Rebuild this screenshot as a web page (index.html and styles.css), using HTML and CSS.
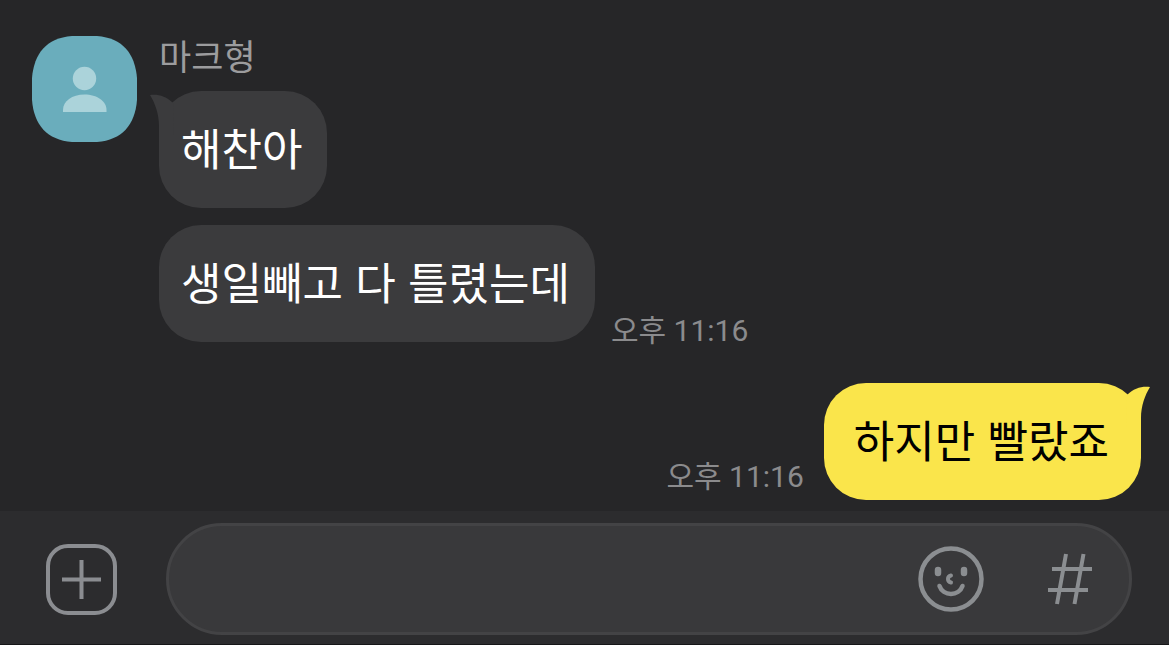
FILE: index.html
```html
<!DOCTYPE html>
<html lang="ko">
<head>
    <meta charset="UTF-8">
    <meta name="viewport" content="width=device-width, initial-scale=1.0">
    <title>마크형</title>
    <link rel="stylesheet" href="styles.css">
</head>
<body>
    <main class="chat">
        <section class="received">
            <div class="avatar">
                <svg viewBox="0 0 105 106" aria-hidden="true">
                    <path d="M40 0H65C91 2 103 18 105 42V64C103 89 90 104 65 106H40C15 104 2 89 0 64V42C2 18 14 2 40 0Z" fill="#6aadbc"/>
                    <circle cx="52.500" cy="42.500" r="11.700" fill="#abd3da"/>
                    <path d="M31 76v-2c0-9 9-15.500 21.500-15.500S74.500 65 74.500 74v2Z" fill="#abd3da"/>
                </svg>
            </div>
            <div class="messages">
                <h1 class="name">마크형</h1>
                <div class="row">
                    <p class="bubble">
                        <svg class="tail tail-left" viewBox="0 0 24 44" aria-hidden="true"><path d="M0 3C8 2 16 4 23 11L24 44H9V34C9 22 5 11 0 3Z" fill="#3b3b3d"/></svg>
                        해찬아
                    </p>
                </div>
                <div class="row">
                    <p class="bubble">생일빼고 다 틀렸는데</p>
                    <time class="time">오후 11:16</time>
                </div>
            </div>
        </section>

        <section class="row sent">
            <time class="time">오후 11:16</time>
            <p class="bubble bubble-mine">
                <svg class="tail tail-right" viewBox="0 0 24 44" aria-hidden="true"><path d="M24 3C16 2 8 4 1 11L0 44H15V34C15 22 19 11 24 3Z" fill="#fae54b"/></svg>
                하지만 빨랐죠
            </p>
        </section>
    </main>

    <form class="input-bar">
        <button class="icon-btn plus-btn" type="button" aria-label="추가">
            <svg viewBox="0 0 72 72" aria-hidden="true">
                <rect x="2" y="3" width="67" height="67" rx="20" fill="none" stroke="#8b8d91" stroke-width="4"/>
                <path d="M35.500 17v39M16 36.500h39" stroke="#8b8d91" stroke-width="4"/>
            </svg>
        </button>
        <div class="field">
            <input class="message-input" type="text" aria-label="메시지">
            <button class="icon-btn" type="button" aria-label="이모티콘">
                <svg viewBox="0 0 66 66" fill="none" stroke="#8b8e91" stroke-linecap="round" aria-hidden="true">
                    <circle cx="33" cy="33" r="30.500" stroke-width="4.500"/>
                    <path d="M20 24v3M46 24v3" stroke-width="6.500"/>
                    <path d="M33 29.500c-4 1-4 6 0 7" stroke-width="4"/>
                    <path d="M21.500 40c3.500 10.500 19.500 10.500 23 0" stroke-width="4.500"/>
                </svg>
            </button>
            <button class="icon-btn" type="button" aria-label="샵검색">
                <svg viewBox="0 0 66 66" fill="none" stroke="#8b8e91" stroke-width="4" aria-hidden="true">
                    <path d="M30 8 21 58M47.500 8l-9 50M16 23h40M12 44h40"/>
                </svg>
            </button>
        </div>
    </form>
</body>
</html>
```
FILE: styles.css
```css
* {
    box-sizing: border-box;
}
body {
    margin: 0;
    min-height: 100vh;
    display: flex;
    flex-direction: column;
    background: #262628;
    color: #fff;
    font-family: "Noto Sans CJK KR", sans-serif;
}
h1, p {
    margin: 0;
    font-weight: 400;
}
svg {
    display: block;
    width: 100%;
    height: 100%;
}
.chat {
    flex: 1;
    display: flex;
    flex-direction: column;
    gap: 41px;
    padding: 36px 28px 10px 32px;
}
.received {
    display: flex;
    align-items: flex-start;
    gap: 22px;
}
.avatar {
    flex: none;
    width: 105px;
    height: 106px;
}
.messages {
    display: flex;
    flex-direction: column;
    gap: 17px;
}
.name {
    color: #9c9c9e;
    font-size: 35px;
    line-height: 38px;
}
.row {
    display: flex;
    align-items: flex-end;
    gap: 16px;
}
.sent {
    justify-content: flex-end;
    gap: 20px;
}
.bubble {
    position: relative;
    padding: 28px 25px 33px 22px;
    border-radius: 42px;
    background: #3b3b3d;
    font-size: 44px;
    line-height: 56px;
}
.bubble-mine {
    padding: 28px 32px 33px 30px;
    background: #fae54b;
    color: #000;
}
.tail {
    position: absolute;
    top: 1px;
    width: 24px;
    height: 44px;
}
.tail-left {
    left: -9px;
}
.tail-right {
    right: -9px;
}
.time {
    color: #8b8b8d;
    font-family: Roboto, "Noto Sans CJK KR", sans-serif;
    font-size: 30px;
    line-height: 22px;
}
.sent .time {
    margin-bottom: 12px;
}
.input-bar {
    display: flex;
    align-items: center;
    gap: 48px;
    padding: 12px 37px 9px 46px;
    border-bottom: 1px solid #161618;
    background: #2c2c2e;
}
.icon-btn {
    flex: none;
    width: 66px;
    height: 66px;
    padding: 0;
    border: 0;
    background: none;
    cursor: pointer;
}
.plus-btn {
    width: 72px;
    height: 72px;
}
.field {
    flex: 1;
    display: flex;
    align-items: center;
    gap: 52px;
    height: 112px;
    padding: 0 27px 0 44px;
    border: 3px solid #434345;
    border-radius: 56px;
    background: #39393b;
}
.message-input {
    flex: 1;
    min-width: 0;
    height: 66px;
    padding: 0;
    border: 0;
    outline: 0;
    background: none;
    color: #fff;
    font-family: inherit;
    font-size: 44px;
}
```
